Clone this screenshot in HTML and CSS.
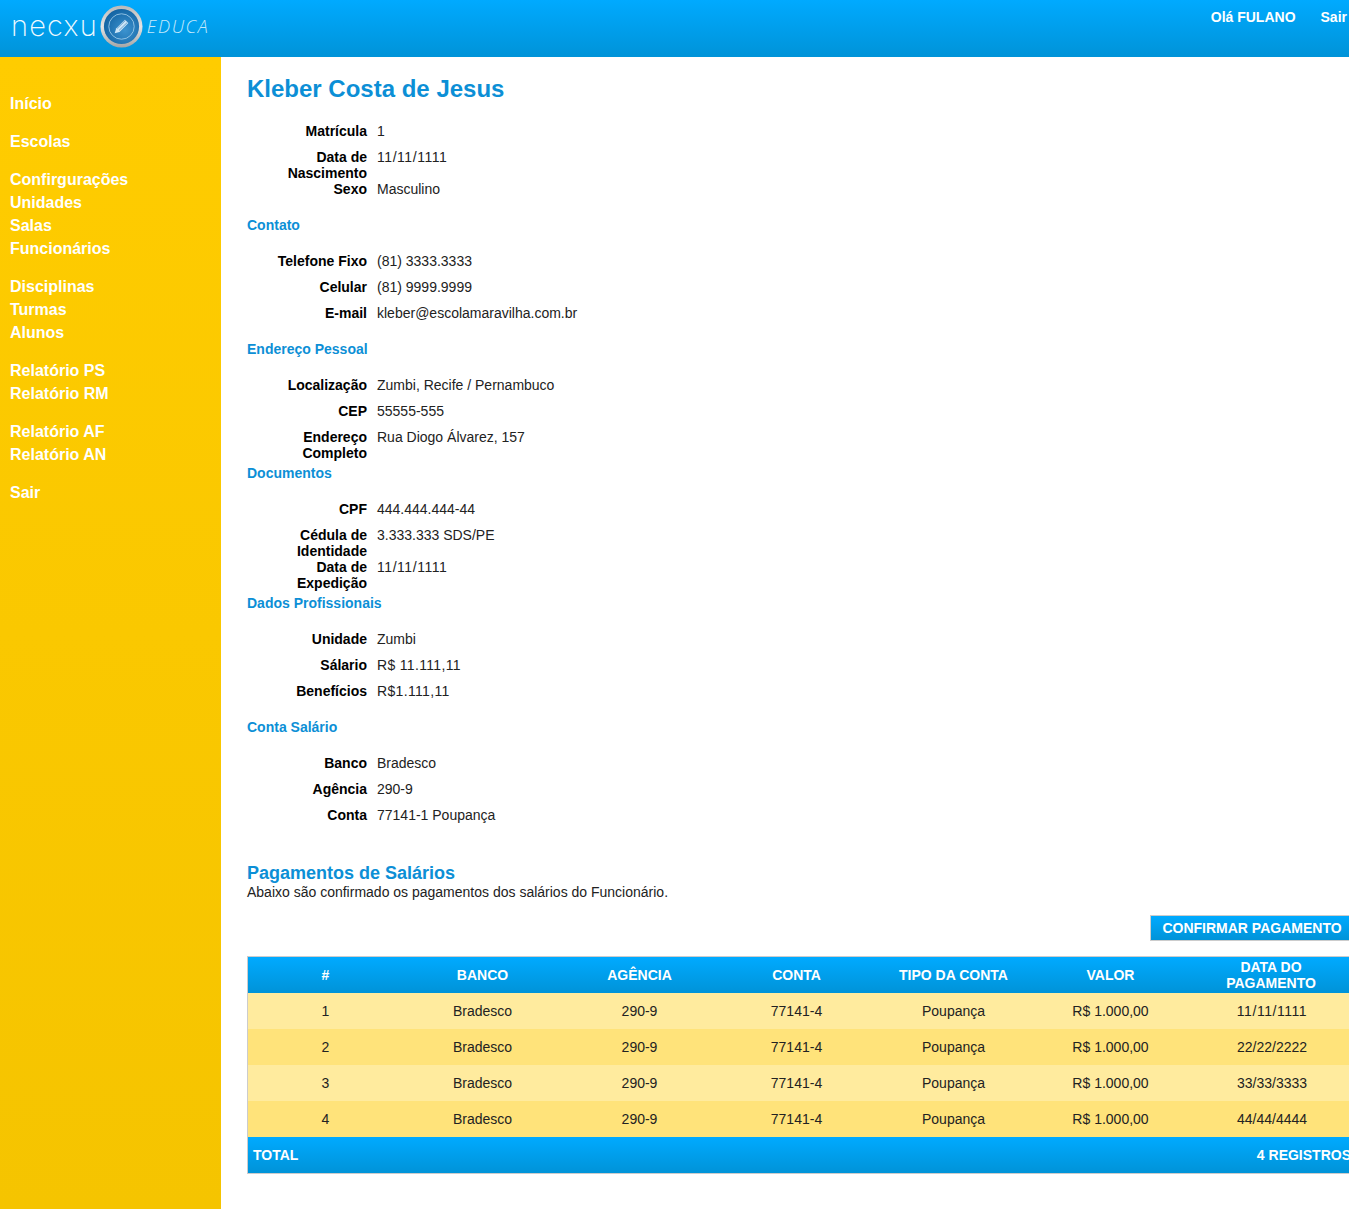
FILE: index.html
```html
<!DOCTYPE html>
<html lang="pt-BR">
<head>
  <meta charset="UTF-8" />
  <title>Necxu Educa</title>
  <link rel="stylesheet" href="styles.css">
</head>
<body>
  <header class="topbar">
    <div class="logo">
      <span class="logo-name">necxu</span>
      <svg class="logo-badge" width="43" height="43" viewBox="0 0 44 44">
        <defs>
          <linearGradient id="ring" x1="0" y1="0" x2="0" y2="1">
            <stop offset="0" stop-color="#b9b9b9" />
            <stop offset="0.5" stop-color="#e4e4e4" />
            <stop offset="1" stop-color="#a5a5a5" />
          </linearGradient>
          <radialGradient id="disc" cx="0.6" cy="0.6" r="0.7">
            <stop offset="0" stop-color="#3c93cf" />
            <stop offset="1" stop-color="#0f5f9e" />
          </radialGradient>
        </defs>
        <circle cx="22" cy="22" r="21.5" fill="url(#ring)" />
        <circle cx="22" cy="22" r="18" fill="url(#disc)" />
        <circle cx="22" cy="22" r="13" fill="none" stroke="#a9d3ee" stroke-width="0.8" />
        <path d="M15 29 L16.5 24 L25.5 15 L29 18.5 L20 27.5 Z" fill="#cfe6f6" />
        <path d="M17.5 24 L26 15.8 M19.5 26 L28 17.8" stroke="#3c86bd" stroke-width="0.7" />
      </svg>
      <span class="logo-sub">EDUCA</span>
    </div>
    <nav class="topnav">
      <a href="#">Olá FULANO</a>
      <a href="#">Sair</a>
    </nav>
  </header>

  <div class="page">
    <aside class="sidebar">
      <ul>
        <li><a href="#">Início</a></li>
      </ul>
      <ul>
        <li><a href="#">Escolas</a></li>
      </ul>
      <ul>
        <li><a href="#">Confirgurações</a></li>
        <li><a href="#">Unidades</a></li>
        <li><a href="#">Salas</a></li>
        <li><a href="#">Funcionários</a></li>
      </ul>
      <ul>
        <li><a href="#">Disciplinas</a></li>
        <li><a href="#">Turmas</a></li>
        <li><a href="#">Alunos</a></li>
      </ul>
      <ul>
        <li><a href="#">Relatório PS</a></li>
        <li><a href="#">Relatório RM</a></li>
      </ul>
      <ul>
        <li><a href="#">Relatório AF</a></li>
        <li><a href="#">Relatório AN</a></li>
      </ul>
      <ul>
        <li><a href="#">Sair</a></li>
      </ul>
    </aside>

    <main class="content">
      <h1>Kleber Costa de Jesus</h1>

      <dl class="details">
        <div class="row"><dt>Matrícula</dt><dd>1</dd></div>
        <div class="row"><dt>Data de Nascimento</dt><dd class="ones">11/11/1111</dd></div>
        <div class="row"><dt>Sexo</dt><dd>Masculino</dd></div>
      </dl>

      <h3>Contato</h3>
      <dl class="details">
        <div class="row"><dt>Telefone Fixo</dt><dd>(81) 3333.3333</dd></div>
        <div class="row"><dt>Celular</dt><dd>(81) 9999.9999</dd></div>
        <div class="row"><dt>E-mail</dt><dd>kleber@escolamaravilha.com.br</dd></div>
      </dl>

      <h3>Endereço Pessoal</h3>
      <dl class="details">
        <div class="row"><dt>Localização</dt><dd>Zumbi, Recife / Pernambuco</dd></div>
        <div class="row"><dt>CEP</dt><dd>55555-555</dd></div>
        <div class="row"><dt>Endereço Completo</dt><dd>Rua Diogo Álvarez, 157</dd></div>
      </dl>

      <h3>Documentos</h3>
      <dl class="details">
        <div class="row"><dt>CPF</dt><dd>444.444.444-44</dd></div>
        <div class="row"><dt>Cédula de Identidade</dt><dd>3.333.333 SDS/PE</dd></div>
        <div class="row"><dt>Data de Expedição</dt><dd class="ones">11/11/1111</dd></div>
      </dl>

      <h3>Dados Profissionais</h3>
      <dl class="details">
        <div class="row"><dt>Unidade</dt><dd>Zumbi</dd></div>
        <div class="row"><dt>Sálario</dt><dd class="ones-money">R$ 11.111,11</dd></div>
        <div class="row"><dt>Benefícios</dt><dd class="ones-money">R$1.111,11</dd></div>
      </dl>

      <h3>Conta Salário</h3>
      <dl class="details">
        <div class="row"><dt>Banco</dt><dd>Bradesco</dd></div>
        <div class="row"><dt>Agência</dt><dd>290-9</dd></div>
        <div class="row"><dt>Conta</dt><dd>77141-1 Poupança</dd></div>
      </dl>

      <h2>Pagamentos de Salários</h2>
      <p class="intro">Abaixo são confirmado os pagamentos dos salários do Funcionário.</p>

      <div class="actions">
        <button type="button">CONFIRMAR PAGAMENTO</button>
      </div>

      <table class="payments">
        <thead>
          <tr>
            <th>#</th>
            <th>BANCO</th>
            <th>AGÊNCIA</th>
            <th>CONTA</th>
            <th>TIPO DA CONTA</th>
            <th>VALOR</th>
            <th class="col-date">DATA DO PAGAMENTO</th>
          </tr>
        </thead>
        <tbody>
          <tr><td>1</td><td>Bradesco</td><td>290-9</td><td>77141-4</td><td>Poupança</td><td>R$ 1.000,00</td><td class="ones">11/11/1111</td></tr>
          <tr><td>2</td><td>Bradesco</td><td>290-9</td><td>77141-4</td><td>Poupança</td><td>R$ 1.000,00</td><td>22/22/2222</td></tr>
          <tr><td>3</td><td>Bradesco</td><td>290-9</td><td>77141-4</td><td>Poupança</td><td>R$ 1.000,00</td><td>33/33/3333</td></tr>
          <tr><td>4</td><td>Bradesco</td><td>290-9</td><td>77141-4</td><td>Poupança</td><td>R$ 1.000,00</td><td>44/44/4444</td></tr>
        </tbody>
        <tfoot>
          <tr>
            <td colspan="3" class="total">TOTAL</td>
            <td colspan="4" class="count">4 REGISTROS</td>
          </tr>
        </tfoot>
      </table>
    </main>
  </div>
</body>
</html>
```

FILE: styles.css
```css
* {
  box-sizing: border-box;
}

html, body {
  margin: 0;
  padding: 0;
}

body {
  font-family: "Liberation Sans", Arial, sans-serif;
  font-size: 14px;
  line-height: 16px;
  color: #222;
  background: #fff;
  overflow-x: hidden;
}

a {
  color: #fff;
  text-decoration: none;
}

.topbar {
  height: 57px;
  display: flex;
  justify-content: space-between;
  background: linear-gradient(to bottom, #00aaff, #0093d8);
}

.logo {
  display: flex;
  align-items: center;
  height: 52px;
  padding-left: 11px;
}

.logo-name {
  font-family: Inter, sans-serif;
  font-weight: 200;
  font-size: 29px;
  letter-spacing: 1.2px;
  color: #f0faff;
}

.logo-badge {
  margin-left: 2px;
}

.logo-sub {
  font-family: "Open Sans", sans-serif;
  font-weight: 300;
  font-style: italic;
  font-size: 18px;
  letter-spacing: 1.6px;
  color: #c4e9fb;
  margin-left: 4px;
}

.topnav {
  display: flex;
  gap: 25px;
  padding: 9px 2px 0 0;
  font-weight: bold;
}

.page {
  display: flex;
  min-height: 1152px;
}

.sidebar {
  flex: 0 0 221px;
  padding: 35px 0 0 10px;
  background: linear-gradient(to bottom, #ffcc00, #f5c400);
  font-size: 16px;
  font-weight: bold;
  line-height: 23px;
}

.sidebar ul {
  list-style: none;
  margin: 0 0 15px;
  padding: 0;
}

.content {
  flex: 1;
  min-width: 0;
  padding: 17px 0 35px 26px;
  overflow: hidden;
}

h1 {
  margin: 0 0 19px;
  font-size: 24px;
  line-height: 30px;
  color: #0c8fd6;
}

h2 {
  margin: 30px 0 0;
  font-size: 18px;
  line-height: 21px;
  color: #0c8fd6;
}

h3 {
  margin: 10px 0 20px;
  font-size: 14px;
  line-height: 16px;
  color: #0c8fd6;
}

.details {
  margin: 0;
}

.details .row {
  clear: left;
}

.details dt {
  float: left;
  width: 120px;
  text-align: right;
  font-weight: bold;
  color: #000;
}

.details dd {
  margin: 0 0 0 130px;
  padding-bottom: 10px;
}

/* the digit 1 runs wider in the original, these keep the same text width */
.ones {
  letter-spacing: 0.55px;
}

.ones-money {
  letter-spacing: 0.33px;
}

.intro {
  margin: 0;
}

.actions {
  display: flex;
  justify-content: flex-end;
  margin-top: 15px;
}

.actions button {
  height: 26px;
  width: 199px;
  padding: 0 0 0 4px;
  border: 1px solid #ccc;
  border-right: 0;
  background: linear-gradient(to bottom, #00aaff, #0093d8);
  color: #fff;
  font-family: inherit;
  font-size: 14px;
  font-weight: bold;
}

.payments {
  width: 1108px;
  margin-top: 15px;
  border-collapse: separate;
  border-spacing: 0;
  table-layout: fixed;
  border: 1px solid #ccc;
}

.payments th,
.payments tfoot td {
  background: linear-gradient(to bottom, #00aaff, #0093d8);
  color: #fff;
  font-weight: bold;
}

.payments th {
  height: 36px;
  padding: 2px 7px 2px 5px;
  text-align: center;
}

.payments .col-date {
  width: 164px;
}

.payments td {
  height: 36px;
  padding: 0 7px 0 5px;
  text-align: center;
}

.payments tbody td:last-child {
  padding: 0 5px;
}

.payments tbody tr:nth-child(odd) td {
  background: #ffeb9e;
}

.payments tbody tr:nth-child(even) td {
  background: #ffe37a;
}

.payments tfoot .total {
  text-align: left;
}

.payments tfoot .count {
  padding-right: 3px;
  text-align: right;
}
```
